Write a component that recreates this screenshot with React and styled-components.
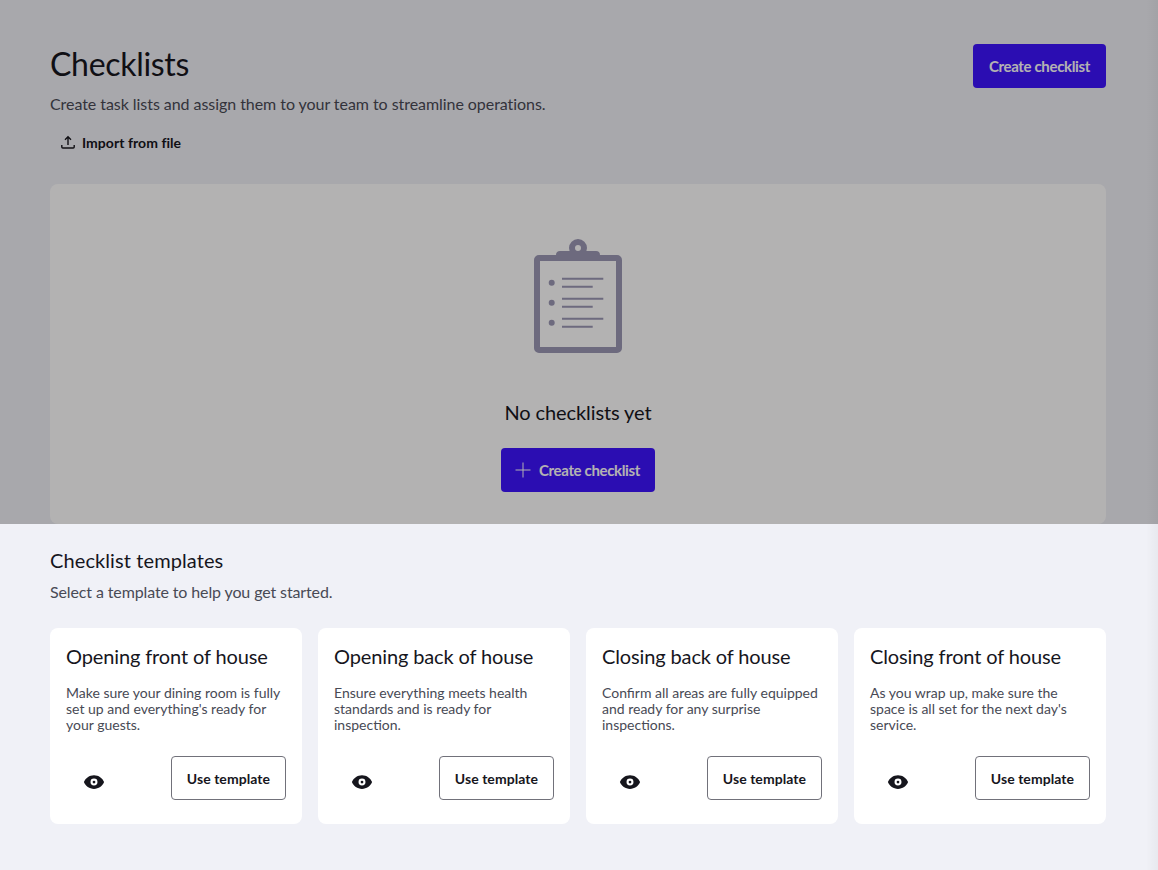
import React from 'react';
import styled, { createGlobalStyle } from 'styled-components';

const GlobalStyle = createGlobalStyle`
  html, body {
    margin: 0;
    padding: 0;
    background-color: #f0f1f7;
    font-family: Lato, "Liberation Sans", sans-serif;
    color: #16161d;
  }
  * {
    box-sizing: border-box;
  }
`;

const Page = styled.div`
  position: relative;
  width: 100%;
  height: 870px;
  overflow: hidden;
  padding: 44px 52px 0 50px;
  background-color: #f0f1f7;
`;

// dimmed layer over the top part of the page
const Scrim = styled.div`
  position: absolute;
  top: 0;
  left: 0;
  right: 0;
  height: 524px;
  background-color: rgba(2, 0, 0, 0.3);
  pointer-events: none;
`;

const EdgeShadow = styled.div`
  position: absolute;
  top: 0;
  right: 0;
  bottom: 0;
  width: 12px;
  background: linear-gradient(to left, rgba(0, 0, 0, 0.035), rgba(0, 0, 0, 0));
  pointer-events: none;
`;

const Header = styled.header`
  display: flex;
  justify-content: space-between;
  align-items: flex-start;
`;

const HeaderText = styled.div`
  display: flex;
  flex-direction: column;
`;

const Title = styled.h1`
  margin: 0;
  font-size: 32px;
  line-height: 40px;
  font-weight: 400;
  letter-spacing: -0.3px;
`;

const Subtitle = styled.p`
  margin: 10px 0 0;
  font-size: 16px;
  line-height: 20px;
  letter-spacing: -0.055px;
  color: #484a55;
`;

const PrimaryButton = styled.button`
  display: inline-flex;
  align-items: center;
  justify-content: center;
  gap: 8px;
  height: 44px;
  padding: 0 16px;
  font: inherit;
  font-size: 15px;
  font-weight: 700;
  letter-spacing: -0.35px;
  color: #fff;
  background-color: #3d13ff;
  border: none;
  border-radius: 4px;
`;

const ImportButton = styled.button`
  display: inline-flex;
  align-items: center;
  align-self: flex-start;
  gap: 6px;
  height: 44px;
  margin-top: 6px;
  padding: 0 0 0 10px;
  font: inherit;
  font-size: 14px;
  font-weight: 700;
  letter-spacing: 0.05px;
  color: #16161d;
  background: transparent;
  border: none;
`;

const EmptyCard = styled.section`
  display: flex;
  flex-direction: column;
  align-items: center;
  height: 340px;
  margin-top: 20px;
  padding-top: 55px;
  background-color: #fff;
  border-radius: 8px;
`;

const EmptyTitle = styled.h2`
  margin: 46px 0 0;
  font-size: 20px;
  line-height: 26px;
  font-weight: 400;
  letter-spacing: -0.1px;
`;

const EmptyAction = styled(PrimaryButton)`
  margin-top: 23px;
  padding: 0 15px 0 14px;
`;

const Templates = styled.section`
  margin-top: 24px;
`;

const SectionTitle = styled.h2`
  margin: 0;
  font-size: 20px;
  line-height: 24px;
  font-weight: 400;
  letter-spacing: 0.1px;
`;

const SectionSub = styled.p`
  margin: 10px 0 0;
  font-size: 16px;
  line-height: 20px;
  letter-spacing: -0.12px;
  color: #484a55;
`;

const TemplateGrid = styled.div`
  display: grid;
  grid-template-columns: repeat(4, 1fr);
  gap: 16px;
  margin-top: 26px;
`;

const TemplateCard = styled.article`
  display: flex;
  flex-direction: column;
  height: 196px;
  padding: 15px 16px 24px;
  background-color: #fff;
  border-radius: 8px;
`;

const CardTitle = styled.h3`
  margin: 0;
  font-size: 20px;
  line-height: 26px;
  font-weight: 400;
  letter-spacing: -0.13px;
`;

const CardText = styled.p`
  margin: 16px 0 0;
  font-size: 14px;
  line-height: 16px;
  color: #484a55;
`;

const CardFooter = styled.div`
  display: flex;
  justify-content: space-between;
  align-items: center;
  margin-top: auto;
`;

const PreviewButton = styled.button`
  display: flex;
  align-items: center;
  justify-content: center;
  width: 22px;
  height: 22px;
  margin: 8px 0 0 17px;
  padding: 0;
  color: #16161d;
  background: transparent;
  border: none;
`;

const SecondaryButton = styled.button`
  height: 44px;
  padding: 0 15px;
  font: inherit;
  font-size: 14px;
  font-weight: 700;
  letter-spacing: 0.05px;
  color: #16161d;
  background-color: #fff;
  border: 1px solid #71717a;
  border-radius: 4px;
`;

const UploadIcon = () => (
  <svg width="16" height="16" viewBox="0 0 16 16" fill="none" stroke="currentColor" strokeWidth="1.4">
    <path d="M8 11V3M5 5.700 8 2.700l3 3" />
    <path d="M1.800 11v2c0 .6.4 1 1 1h10.400c.6 0 1-.4 1-1v-2" />
  </svg>
);

const PlusIcon = () => (
  <svg width="16" height="16" viewBox="0 0 16 16" fill="none" stroke="currentColor" strokeWidth="1">
    <path d="M8 .5v15M.5 8h15" />
  </svg>
);

const EyeIcon = () => (
  <svg width="22" height="22" viewBox="0 0 24 24" fill="currentColor">
    <path
      fillRule="evenodd"
      d="M12 4.500C7 4.500 2.730 7.610 1 12c1.730 4.390 6 7.500 11 7.500s9.270-3.110 11-7.500c-1.730-4.390-6-7.500-11-7.500zM12 15.800a3.800 3.800 0 1 1 0-7.600 3.800 3.800 0 0 1 0 7.600zm0-2.300a1.500 1.500 0 1 0 0-3 1.500 1.500 0 0 0 0 3z"
    />
  </svg>
);

const ClipboardIcon = () => (
  <svg width="88" height="114" viewBox="0 0 88 114" fill="none">
    <circle cx="44" cy="9" r="6" stroke="#9b98b5" strokeWidth="6" />
    <path d="M22 18v-2c0-2.500 1.500-4 4-4h36c2.500 0 4 1.500 4 4v2z" fill="#9b98b5" />
    <rect x="3" y="19" width="82" height="92" rx="2" stroke="#9b98b5" strokeWidth="6" />
    <g fill="#9b98b5">
      <circle cx="17.700" cy="43.700" r="3" />
      <circle cx="17.700" cy="63.700" r="3" />
      <circle cx="17.700" cy="83.700" r="3" />
    </g>
    <path
      d="M28 39.700h41.300M28 47.700h30.700M28 59.700h41.300M28 67.700h30.700M28 79.700h41.300M28 87.700h30.700"
      stroke="#9b98b5"
      strokeWidth="2"
    />
  </svg>
);

const templates = [
  {
    title: 'Opening front of house',
    text: "Make sure your dining room is fully set up and everything's ready for your guests.",
  },
  {
    title: 'Opening back of house',
    text: 'Ensure everything meets health standards and is ready for inspection.',
  },
  {
    title: 'Closing back of house',
    text: 'Confirm all areas are fully equipped and ready for any surprise inspections.',
  },
  {
    title: 'Closing front of house',
    text: "As you wrap up, make sure the space is all set for the next day's service.",
  },
];

const App = () => {
  return (
    <Page>
      <GlobalStyle />
      <Header>
        <HeaderText>
          <Title>Checklists</Title>
          <Subtitle>Create task lists and assign them to your team to streamline operations.</Subtitle>
          <ImportButton>
            <UploadIcon />
            Import from file
          </ImportButton>
        </HeaderText>
        <PrimaryButton>Create checklist</PrimaryButton>
      </Header>
      <EmptyCard>
        <ClipboardIcon />
        <EmptyTitle>No checklists yet</EmptyTitle>
        <EmptyAction>
          <PlusIcon />
          Create checklist
        </EmptyAction>
      </EmptyCard>
      <Templates>
        <SectionTitle>Checklist templates</SectionTitle>
        <SectionSub>Select a template to help you get started.</SectionSub>
        <TemplateGrid>
          {templates.map((t) => (
            <TemplateCard key={t.title}>
              <CardTitle>{t.title}</CardTitle>
              <CardText>{t.text}</CardText>
              <CardFooter>
                <PreviewButton>
                  <EyeIcon />
                </PreviewButton>
                <SecondaryButton>Use template</SecondaryButton>
              </CardFooter>
            </TemplateCard>
          ))}
        </TemplateGrid>
      </Templates>
      <Scrim />
      <EdgeShadow />
    </Page>
  );
};

export default App;
